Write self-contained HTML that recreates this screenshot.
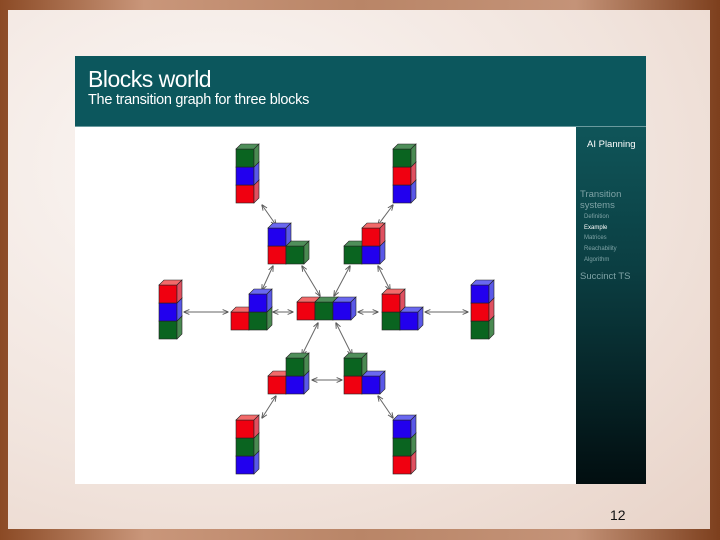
<!DOCTYPE html>
<html><head><style>
body{margin:0;width:720px;height:540px;overflow:hidden;position:relative;font-family:"Liberation Sans",sans-serif;
background:linear-gradient(90deg,#8b4a25 0%,#c9967a 20%,#b98567 50%,#c49378 80%,#7d3f1d 100%);}
#inner{position:absolute;left:8px;top:10px;width:702px;height:519px;
background:radial-gradient(ellipse at 30% 30%,#fbf7f5 0%,#f1e4dd 60%,#e8d3c8 100%);}
#slide{position:absolute;left:75px;top:56px;width:571px;height:428px;background:#fff;}
#hdr{position:absolute;left:0;top:0;width:571px;height:70px;background:#0c575d;color:#fff;border-bottom:1px solid #6a9a9e}
#hdr .t{position:absolute;left:13px;top:10px;font-size:23px;letter-spacing:-0.5px}
#hdr .s{position:absolute;left:13px;top:36px;font-size:14.5px;letter-spacing:-0.3px}
#side{position:absolute;left:501px;top:71px;width:70px;height:357px;background:linear-gradient(#0f5559 0%,#0b3e42 40%,#020e10 100%);color:#fff}
#side div{position:absolute;white-space:nowrap}
.pn{position:absolute;left:610px;top:507px;font-size:14px;color:#111}
</style></head><body>
<div id="inner"></div>
<div id="slide">
<div id="hdr"><div class="t">Blocks world</div><div class="s">The transition graph for three blocks</div></div>
<div id="side">
<div style="left:11px;top:12px;font-size:9.5px">AI Planning</div>
<div style="left:4px;top:62px;font-size:9.5px;color:#7fa3a6;line-height:11px">Transition<br>systems</div>
<div style="left:8px;top:87px;font-size:6px;color:#7fa3a6">Definition</div>
<div style="left:8px;top:98px;font-size:6px;color:#fff">Example</div>
<div style="left:8px;top:108px;font-size:6px;color:#7fa3a6">Matrices</div>
<div style="left:8px;top:119px;font-size:6px;color:#7fa3a6">Reachability</div>
<div style="left:8px;top:130px;font-size:6px;color:#7fa3a6">Algorithm</div>
<div style="left:4px;top:144px;font-size:9.5px;color:#7fa3a6">Succinct TS</div>
</div>
</div>
<svg style="position:absolute;left:0;top:0" width="720" height="540" id="g">
<defs>
<marker id="a" viewBox="0 0 10 10" refX="9" refY="5" markerWidth="6" markerHeight="6" orient="auto-start-reverse"><path d="M0,1 L10,5 L0,9" fill="none" stroke="#555" stroke-width="1.5"/></marker>
<g id="R"><rect width="18" height="18" fill="#f00010" stroke="#222" stroke-width=".6"/><path d="M0,0 l5,-5 h18 l-5,5z" fill="#f26a6a" stroke="#222" stroke-width=".6"/><path d="M18,0 l5,-5 v18 l-5,5z" fill="#e05060" stroke="#222" stroke-width=".6"/></g>
<g id="G"><rect width="18" height="18" fill="#0a6420" stroke="#222" stroke-width=".6"/><path d="M0,0 l5,-5 h18 l-5,5z" fill="#4f8f5a" stroke="#222" stroke-width=".6"/><path d="M18,0 l5,-5 v18 l-5,5z" fill="#4a8a52" stroke="#222" stroke-width=".6"/></g>
<g id="B"><rect width="18" height="18" fill="#2200ee" stroke="#222" stroke-width=".6"/><path d="M0,0 l5,-5 h18 l-5,5z" fill="#6a68f0" stroke="#222" stroke-width=".6"/><path d="M18,0 l5,-5 v18 l-5,5z" fill="#5a58e8" stroke="#222" stroke-width=".6"/></g>
</defs>
<g stroke="#666" stroke-width="1" marker-start="url(#a)" marker-end="url(#a)">
<line x1="262" y1="205" x2="276" y2="225"/><line x1="393" y1="205" x2="378" y2="225"/>
<line x1="273" y1="266" x2="262" y2="290"/><line x1="302" y1="266" x2="320" y2="296"/>
<line x1="350" y1="266" x2="334" y2="296"/><line x1="378" y1="266" x2="390" y2="290"/>
<line x1="184" y1="312" x2="228" y2="312"/><line x1="273" y1="312" x2="293" y2="312"/>
<line x1="358" y1="312" x2="378" y2="312"/><line x1="425" y1="312" x2="468" y2="312"/>
<line x1="318" y1="323" x2="302" y2="355"/><line x1="336" y1="323" x2="352" y2="355"/>
<line x1="312" y1="380" x2="342" y2="380"/>
<line x1="276" y1="396" x2="262" y2="418"/><line x1="378" y1="396" x2="393" y2="418"/>
</g>
<use href="#R" x="236" y="185"/><use href="#B" x="236" y="167"/><use href="#G" x="236" y="149"/>
<use href="#B" x="393" y="185"/><use href="#R" x="393" y="167"/><use href="#G" x="393" y="149"/>
<use href="#G" x="159" y="321"/><use href="#B" x="159" y="303"/><use href="#R" x="159" y="285"/>
<use href="#G" x="471" y="321"/><use href="#R" x="471" y="303"/><use href="#B" x="471" y="285"/>
<use href="#B" x="236" y="456"/><use href="#G" x="236" y="438"/><use href="#R" x="236" y="420"/>
<use href="#R" x="393" y="456"/><use href="#G" x="393" y="438"/><use href="#B" x="393" y="420"/>
<use href="#R" x="297" y="302"/><use href="#G" x="315" y="302"/><use href="#B" x="333" y="302"/>
<use href="#R" x="231" y="312"/><use href="#G" x="249" y="312"/><use href="#B" x="249" y="294"/>
<use href="#G" x="382" y="312"/><use href="#B" x="400" y="312"/><use href="#R" x="382" y="294"/>
<use href="#R" x="268" y="246"/><use href="#G" x="286" y="246"/><use href="#B" x="268" y="228"/>
<use href="#G" x="344" y="246"/><use href="#B" x="362" y="246"/><use href="#R" x="362" y="228"/>
<use href="#R" x="268" y="376"/><use href="#B" x="286" y="376"/><use href="#G" x="286" y="358"/>
<use href="#R" x="344" y="376"/><use href="#B" x="362" y="376"/><use href="#G" x="344" y="358"/>
</svg>
<div class="pn">12</div>
</body></html>
